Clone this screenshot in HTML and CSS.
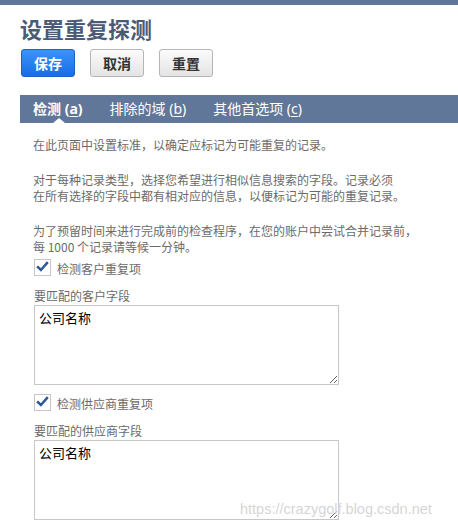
FILE: index.html
```html
<!DOCTYPE html>
<html lang="zh-CN">
<head>
<meta charset="utf-8">
<title>设置重复探测</title>
<link rel="stylesheet" href="styles.css">
</head>
<body>
<div class="topbar"></div>
<div class="page">
  <h1 class="title">设置重复探测</h1>
  <div class="actions">
    <button class="btn btn-primary">保存</button>
    <button class="btn">取消</button>
    <button class="btn">重置</button>
  </div>
  <div class="tabs">
    <div class="tab tab-active">检测 (<u>a</u>)</div>
    <div class="tab">排除的域 (<u>b</u>)</div>
    <div class="tab">其他首选项 (<u>c</u>)</div>
  </div>
  <div class="content">
    <p class="para">在此页面中设置标准，以确定应标记为可能重复的记录。</p>
    <p class="para">对于每种记录类型，选择您希望进行相似信息搜索的字段。记录必须<br>在所有选择的字段中都有相对应的信息，以便标记为可能的重复记录。</p>
    <p class="para">为了预留时间来进行完成前的检查程序，在您的账户中尝试合并记录前，<br>每 1000 个记录请等候一分钟。</p>

    <label class="check-row">
      <span class="checkbox"><svg viewBox="0 0 16 16" width="16" height="16"><path d="M3.2 8.2 L6.3 11.2 L12.8 3.8" fill="none" stroke="#2b5797" stroke-width="2.6" stroke-linecap="square"/></svg></span>
      <span class="check-label">检测客户重复项</span>
    </label>
    <div class="field-label">要匹配的客户字段</div>
    <textarea class="field">公司名称</textarea>

    <label class="check-row">
      <span class="checkbox"><svg viewBox="0 0 16 16" width="16" height="16"><path d="M3.2 8.2 L6.3 11.2 L12.8 3.8" fill="none" stroke="#2b5797" stroke-width="2.6" stroke-linecap="square"/></svg></span>
      <span class="check-label">检测供应商重复项</span>
    </label>
    <div class="field-label">要匹配的供应商字段</div>
    <textarea class="field">公司名称</textarea>

    <div class="check-row">
      <span class="checkbox"></span>
    </div>
  </div>
</div>
<div class="watermark">https://crazygolf.blog.csdn.net</div>
</body>
</html>
```

FILE: styles.css
```css
html {
  overflow: hidden;
}
body {
  margin: 0;
  background: #ffffff;
  font-family: "Noto Sans", "Noto Sans CJK SC", sans-serif;
  position: relative;
  height: 528px;
  overflow: hidden;
}
.topbar {
  height: 5px;
  background: #607799;
}
.page {
  padding-left: 20px;
}
.title {
  margin: 10px 0 0;
  font-size: 22px;
  line-height: 28px;
  font-weight: bold;
  color: #4b5b75;
}
.actions {
  display: flex;
  gap: 15px;
  margin-top: 6px;
  padding-left: 1px;
}
.btn {
  width: 54px;
  height: 28px;
  padding: 0;
  border: 1px solid #b5b5b5;
  border-radius: 3px;
  background: linear-gradient(#fbfbfb, #e4e4e4);
  font-family: "Noto Sans CJK SC", sans-serif;
  font-size: 14px;
  font-weight: bold;
  color: #333333;
  line-height: 26px;
}
.btn-primary {
  border-color: #1b62c8;
  background: linear-gradient(#3b93f7, #166ee8);
  color: #ffffff;
}
.tabs {
  margin-top: 18px;
  height: 28px;
  background: #607799;
  display: flex;
  gap: 27px;
  padding-left: 13px;
}
.tab {
  position: relative;
  font-size: 14px;
  line-height: 28px;
  color: #ffffff;
  white-space: nowrap;
}
.tab u {
  text-underline-offset: 2px;
}
.tab-active {
  font-weight: bold;
}
.tab-active::after {
  content: "";
  position: absolute;
  left: 20px;
  bottom: 0;
  border-left: 6px solid transparent;
  border-right: 6px solid transparent;
  border-bottom: 5px solid #ffffff;
}
.content {
  padding-left: 13px;
  padding-top: 14px;
  font-family: "Noto Sans CJK SC", sans-serif;
  color: #6b6b6b;
  font-size: 12px;
}
.para {
  margin: 0 0 19px;
  line-height: 16px;
}
.para:last-of-type {
  margin-bottom: 0;
}
.check-row {
  display: flex;
  align-items: center;
  gap: 6px;
  margin-top: 3px;
  margin-left: 1px;
  height: 18px;
}
.checkbox {
  width: 15px;
  height: 15px;
  border: 1px solid #c6c6c6;
  background: #ffffff;
  display: flex;
  align-items: center;
  justify-content: center;
}
.checkbox svg {
  display: block;
  margin: -1px 0 0 0;
}
.check-label {
  font-size: 12px;
  line-height: 16px;
  padding-top: 4px;
  color: #6b6b6b;
}
.field-label {
  margin-top: 12px;
  margin-left: 1px;
  line-height: 16px;
  font-size: 12px;
}
.field {
  display: block;
  box-sizing: border-box;
  width: 305px;
  height: 80px;
  margin: 1px 0 8px 1px;
  border: 1px solid #c8c8c8;
  padding: 3px 4px;
  font-family: "Noto Sans CJK SC", sans-serif;
  font-size: 13px;
  line-height: 18px;
  color: #000000;
  background: #ffffff;
}
.watermark {
  position: absolute;
  left: 240px;
  top: 501px;
  font-family: "Liberation Sans", Arial, sans-serif;
  font-size: 14.5px;
  color: rgba(205, 205, 205, 0.85);
  text-shadow: 0 0 1px rgba(255, 255, 255, 0.8);
  white-space: nowrap;
}
```
